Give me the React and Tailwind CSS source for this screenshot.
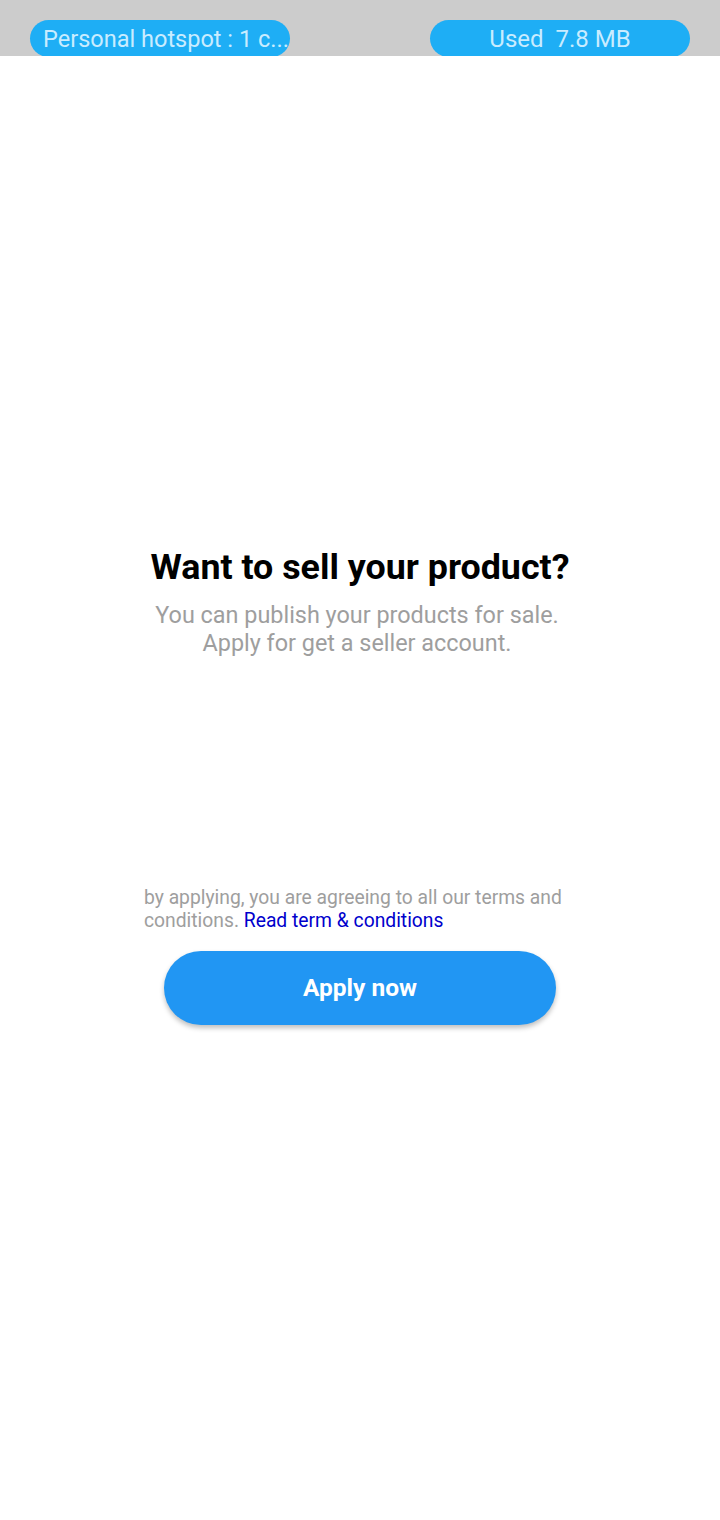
export default function App() {
  return (
    <div className="w-[720px] h-[1520px] bg-white flex flex-col" style={{ fontFamily: "Roboto, 'Noto Sans', sans-serif" }}>
      <div className="h-[56px] bg-[#cccccc] flex items-end justify-between px-[30px] overflow-hidden">
        <div className="w-[260px] h-[37px] rounded-full bg-[#1eaef5] flex items-center pl-[13px] overflow-hidden translate-y-[1px]">
          <span className="text-[24px] leading-none text-[#c9ecff] whitespace-nowrap origin-left scale-x-[0.98] inline-block">Personal hotspot : 1 c...</span>
        </div>
        <div className="w-[260px] h-[37px] rounded-full bg-[#1eaef5] flex items-center justify-center overflow-hidden translate-y-[1px]">
          <span className="text-[24px] leading-none text-[#c9ecff] whitespace-nowrap inline-block">Used&nbsp; 7.8 MB</span>
        </div>
      </div>
      <div className="flex flex-col items-center">
        <h1 className="mt-[491px] text-[35.8px] leading-[40px] font-bold text-black">Want to sell your product?</h1>
        <p className="mt-[14px] pr-[6px] text-[23.4px] leading-[28px] text-[#9e9e9e] text-center">
          You can publish your products for sale.
          <br />
          Apply for get a seller account.
        </p>
        <p className="mt-[229px] w-[432px] text-[19.3px] leading-[23px] text-[#9e9e9e]">
          by applying, you are agreeing to all our terms and conditions.{" "}
          <span className="text-[#0000cc]">Read term &amp; conditions</span>
        </p>
        <button className="mt-[19px] w-[392px] h-[74px] rounded-full bg-[#2196f3] text-white text-[24.5px] font-bold shadow-[0_3px_5px_rgba(0,0,0,0.25)]">
          Apply now
        </button>
      </div>
    </div>
  );
}
